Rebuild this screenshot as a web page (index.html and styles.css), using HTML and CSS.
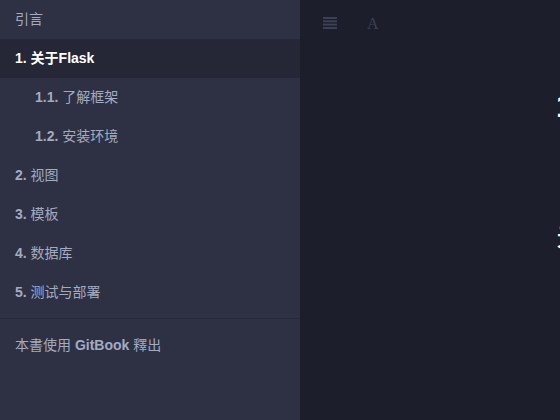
FILE: index.html
```html
<!DOCTYPE html>
<html lang="zh">
<head>
<meta charset="utf-8">
<title>关于Flask</title>
<link rel="stylesheet" href="styles.css">
</head>
<body>
<div class="book">
  <nav class="summary">
    <ul class="summary-list">
      <li class="item"><a>引言</a></li>
      <li class="item active"><a><b>1.</b> 关于Flask</a></li>
      <li class="item sub"><a><b>1.1.</b> 了解框架</a></li>
      <li class="item sub"><a><b>1.2.</b> 安装环境</a></li>
      <li class="item"><a><b>2.</b> 视图</a></li>
      <li class="item"><a><b>3.</b> 模板</a></li>
      <li class="item"><a><b>4.</b> 数据库</a></li>
      <li class="item"><a><b>5.</b> 测试与部署</a></li>
      <li class="divider"></li>
      <li class="item footer" lang="zh-Hant"><a>本書使用 <b>GitBook</b> 釋出</a></li>
    </ul>
  </nav>
  <main class="body">
    <div class="toolbar">
      <span class="btn" aria-label="目录">
        <svg width="14" height="12" viewBox="0 0 14 12"><rect x="0" y="0" width="14" height="2"/><rect x="0" y="3.3" width="14" height="2"/><rect x="0" y="6.6" width="14" height="2"/><rect x="0" y="10" width="14" height="2"/></svg>
      </span>
      <span class="btn font">A</span>
    </div>
    <div class="page">
      <h1 class="title">1. 关于Flask</h1>
      <p class="para">关于 Flask 的简介</p>
    </div>
  </main>
</div>
</body>
</html>
```

FILE: styles.css
```css
html, body {
  margin: 0;
  padding: 0;
  height: 100%;
}
body {
  background: #1c1e2b;
  font-family: "Liberation Sans", "Noto Sans CJK SC", sans-serif;
  font-size: 14px;
  overflow: hidden;
}
.book {
  display: flex;
  height: 420px;
}
.summary {
  width: 300px;
  flex: none;
  background: #2d3143;
}
.summary-list {
  list-style: none;
  margin: 0;
  padding: 0;
}
.item a {
  display: block;
  padding: 10px 15px;
  line-height: 19px;
  color: #a4aac0;
  white-space: nowrap;
}
.item b {
  font-weight: bold;
}
.item.active {
  background: #252737;
}
.item.active a {
  color: #ffffff;
  font-weight: bold;
}
.item.sub a {
  padding-left: 35px;
}
.footer a {
  font-family: "Liberation Sans", "Noto Sans CJK TC", sans-serif;
}
.divider {
  height: 1px;
  margin: 6px 0 7px;
  background: #26293a;
}
.body {
  flex: 1;
  min-width: 0;
  overflow: hidden;
  position: relative;
}
.toolbar {
  display: flex;
  align-items: center;
  height: 46px;
  padding-left: 23px;
  gap: 30px;
}
.btn {
  display: flex;
  align-items: center;
  color: #3c4055;
  fill: #3c4055;
}
.btn.font {
  font-family: "Liberation Serif", "DejaVu Serif", serif;
  font-size: 16px;
  line-height: 16px;
  padding-top: 2px;
}
.page {
  padding-left: 256px;
  white-space: nowrap;
}
.title {
  margin: 40px 0 0;
  font-size: 32px;
  line-height: 40px;
  color: #ffffff;
  font-weight: bold;
}
.para {
  margin: 84px 0 0;
  font-size: 30px;
  color: #ffffff;
}
```
